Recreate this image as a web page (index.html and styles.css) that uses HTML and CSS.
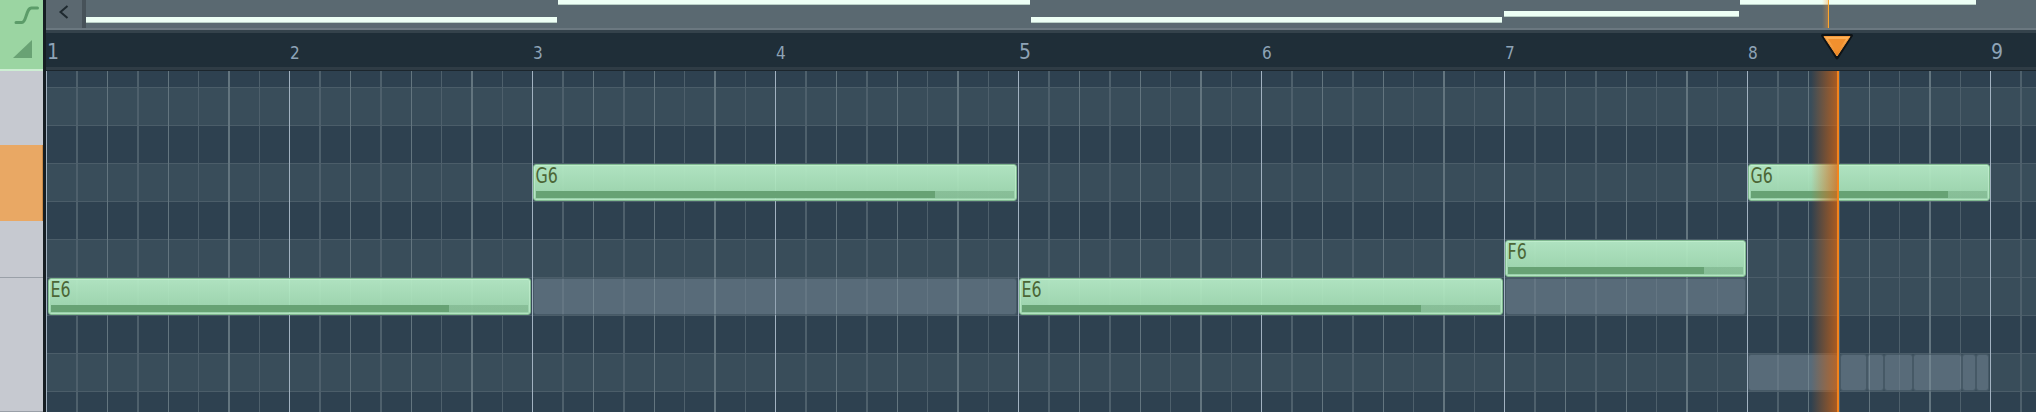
FILE: index.html
```html
<!DOCTYPE html>
<html lang="en">
<head>
  <meta charset="UTF-8" />
  <title>Piano roll</title>
  <link rel="stylesheet" href="styles.css">
</head>
<body>
  <div class="app">
    <aside class="side">
      <div class="tools">
        <svg class="tool-curve" width="25" height="22" viewBox="0 0 25 22">
          <path d="M2 18.5 H8 C12.5 18.5 12 4 17.5 4 H23.5" />
        </svg>
        <svg class="tool-vel" width="21" height="20" viewBox="0 0 21 20">
          <polygon points="1,19 20,19 20,1" />
        </svg>
      </div>
      <div class="keys">
        <div class="key key-a"></div>
        <div class="key key-g active"></div>
        <div class="key key-f"></div>
        <div class="key key-e"></div>
      </div>
    </aside>
    <div class="sep"></div>

    <main class="editor">
      <div class="overview">
        <button class="back-btn">
          <svg width="36" height="28" viewBox="0 0 36 28"><polyline points="21.5,6 14.5,12 21.5,18" /></svg>
        </button>
        <div class="ov-track">
          <div class="ov-note ov-e" style="left:0;width:471px"></div>
          <div class="ov-note ov-g" style="left:472px;width:472px"></div>
          <div class="ov-note ov-e" style="left:945px;width:471px"></div>
          <div class="ov-note ov-f" style="left:1418px;width:235px"></div>
          <div class="ov-note ov-g" style="left:1654px;width:236px"></div>
          <div class="ov-head" style="left:1736px"></div>
        </div>
      </div>
      <div class="ov-sep"></div>

      <div class="ruler">
        <div class="bar-cell big">1</div>
        <div class="bar-cell">2</div>
        <div class="bar-cell">3</div>
        <div class="bar-cell">4</div>
        <div class="bar-cell big">5</div>
        <div class="bar-cell">6</div>
        <div class="bar-cell">7</div>
        <div class="bar-cell">8</div>
        <div class="bar-cell big">9</div>
        <svg class="marker" style="left:1773px" width="36" height="28" viewBox="0 0 36 28">
          <defs>
            <linearGradient id="mk" x1="0" y1="0" x2="0" y2="1">
              <stop offset="0" stop-color="#ffb45a" />
              <stop offset="1" stop-color="#ea7f1a" />
            </linearGradient>
          </defs>
          <path d="M3.5 2.5 H32.5 L18 25 Z" fill="#0e1316" stroke="#0e1316" stroke-width="3" stroke-linejoin="round" />
          <path d="M5 3.5 H31 L18 23 Z" fill="url(#mk)" stroke="#f59a3c" stroke-width="1" stroke-linejoin="round" />
          <path d="M9 6 H27 L18 19.5 Z" fill="#f2902e" />
        </svg>
      </div>
      <div class="ruler-sep"></div>

      <div class="roll">
        <div class="rows">
          <div class="row black first"></div>
          <div class="row"></div>
          <div class="row black"></div>
          <div class="row"></div>
          <div class="row black"></div>
          <div class="row"></div>
          <div class="row"></div>
          <div class="row black"></div>
          <div class="row"></div>
          <div class="row black"></div>
        </div>
        <div class="vlines"></div>

        <div class="ghost" style="left:487px;top:207px;width:484px"></div>
        <div class="ghost" style="left:1459px;top:207px;width:241px"></div>
        <div class="ghost" style="left:1702px;top:283px;width:90px"></div>
        <div class="ghost" style="left:1794px;top:283px;width:27px"></div>
        <div class="ghost" style="left:1821px;top:283px;width:17px"></div>
        <div class="ghost" style="left:1838px;top:283px;width:29px"></div>
        <div class="ghost" style="left:1867px;top:283px;width:49px"></div>
        <div class="ghost" style="left:1916px;top:283px;width:14px"></div>
        <div class="ghost" style="left:1930px;top:283px;width:13px"></div>

        <div class="note" style="left:1.5px;top:207px;width:483.5px"><span>E6</span><i></i></div>
        <div class="note" style="left:487.3px;top:93px;width:484px"><span>G6</span><i></i></div>
        <div class="note" style="left:973px;top:207px;width:484px"><span>E6</span><i></i></div>
        <div class="note" style="left:1459px;top:169px;width:241px"><span>F6</span><i></i></div>
        <div class="note" style="left:1701.5px;top:93px;width:242px"><span>G6</span><i></i></div>

        <div class="playhead" style="left:1765px"></div>
      </div>
    </main>
  </div>
</body>
</html>
```

FILE: styles.css
```css
* {
  margin: 0;
  padding: 0;
  box-sizing: border-box;
}

body {
  width: 2036px;
  height: 412px;
  overflow: hidden;
  background: #1b252c;
  font-family: "DejaVu Sans", sans-serif;
  font-stretch: condensed;
}

.app {
  display: flex;
  height: 412px;
}

/* left column: tools + keyboard */
.side {
  width: 43px;
  display: flex;
  flex-direction: column;
}

.tools {
  height: 71px;
  background: #9bd5a2;
  border-bottom: 2px solid #cdeed3;
  display: flex;
  flex-direction: column;
  padding-top: 4px;
}

.tool-curve {
  display: block;
  margin-left: 14px;
}

.tool-curve path {
  fill: none;
  stroke: #5c9c69;
  stroke-width: 3;
  stroke-linecap: round;
}

.tool-vel {
  display: block;
  margin-left: 12px;
  margin-top: 13px;
}

.tool-vel polygon {
  fill: #69a274;
}

.keys {
  flex: 1;
  background: #c6c9d0;
  display: flex;
  flex-direction: column;
}

.key-a { height: 74px; }
.key-g { height: 76px; }
.key-f { height: 57px; border-bottom: 1px solid #9aa0a8; }
.key-e { flex: 1; border-bottom: 1px solid #9aa0a8; }

.key.active {
  background: #e9a864;
  border-right: 1px solid #c98a48;
}

.sep {
  width: 3px;
  background: #161e23;
}

/* right part */
.editor {
  flex: 1;
  min-width: 0;
  display: flex;
  flex-direction: column;
}

.overview {
  height: 28px;
  display: flex;
  background: #5a6971;
}

.back-btn {
  width: 40px;
  height: 28px;
  background: #5b6870;
  border: none;
  border-right: 4px solid #475259;
}

.back-btn svg {
  display: block;
}

.back-btn polyline {
  fill: none;
  stroke: #1e292f;
  stroke-width: 2;
}

.ov-track {
  flex: 1;
  position: relative;
  overflow: hidden;
}

.ov-note {
  position: absolute;
  height: 6px;
  background: #edfff5;
  border-bottom: 1px solid #b9cfc6;
}

.ov-e { top: 17px; }
.ov-f { top: 11px; }
.ov-g { top: -1px; }

.ov-head {
  position: absolute;
  top: 0;
  width: 7px;
  height: 28px;
  background: linear-gradient(90deg, rgba(255, 160, 50, 0), rgba(255, 150, 40, 0.35) 80%, #ffa62a 80%, #ffa62a);
}

.ov-sep {
  height: 5px;
  border-top: 2px solid #6b7880;
  background: #34424b;
}

.ruler {
  height: 34px;
  background: #1f2e38;
  display: flex;
  position: relative;
  overflow: hidden;
}

.bar-cell {
  width: 243px;
  flex: none;
  padding-left: 1px;
  padding-top: 10px;
  color: #8ea3b6;
  font-size: 17px;
  line-height: 20px;
}

.bar-cell.big {
  font-size: 21px;
  padding-top: 7px;
  line-height: 24px;
}

.marker {
  position: absolute;
  top: 0;
}

.ruler-sep {
  height: 4px;
  background: #2f3c45;
  border-bottom: 1px solid #1c262d;
}

/* piano roll grid */
.roll {
  flex: 1;
  position: relative;
  overflow: hidden;
}

.rows {
  display: flex;
  flex-direction: column;
}

.row {
  height: 38px;
  flex: none;
  background: #394d5a;
  border-bottom: 1px solid #4b5d69;
}

.row.black {
  background: #2e4150;
}

.row.first {
  height: 17px;
}

.vlines {
  position: absolute;
  inset: 0;
  background-image:
    repeating-linear-gradient(90deg, #a2b2c1 0 1.4px, transparent 1.4px 243px),
    repeating-linear-gradient(90deg, #63757f 0 1.4px, transparent 1.4px 60.75px),
    repeating-linear-gradient(90deg, #4e606c 0 1.4px, transparent 1.4px 30.375px);
}

.note,
.ghost {
  position: absolute;
  height: 37px;
  border-radius: 3px;
}

.ghost {
  background: rgba(132, 150, 164, 0.42);
  border: 1px solid rgba(40, 55, 66, 0.35);
}

.note {
  background: linear-gradient(180deg, rgba(184, 238, 200, 0.93), rgba(160, 218, 176, 0.93));
  border: 1px solid #7fb88f;
  box-shadow: inset 0 0 0 1px rgba(210, 250, 220, 0.45);
}

.note span {
  display: inline-block;
  padding: 0 0 0 2px;
  font-size: 22px;
  line-height: 22px;
  color: #4c6636;
  transform: scaleX(0.8);
  transform-origin: 0 0;
}

.note i {
  position: absolute;
  left: 2px;
  right: 2px;
  bottom: 2px;
  height: 7px;
  background: linear-gradient(90deg, #67a274 0 83.5%, rgba(110, 165, 125, 0.45) 83.5%);
}

.playhead {
  position: absolute;
  top: 0;
  bottom: 0;
  width: 28px;
  background: linear-gradient(90deg, rgba(230, 110, 20, 0), rgba(215, 100, 15, 0.72) 92%, #f5841c 92%, #f5841c);
}
```
